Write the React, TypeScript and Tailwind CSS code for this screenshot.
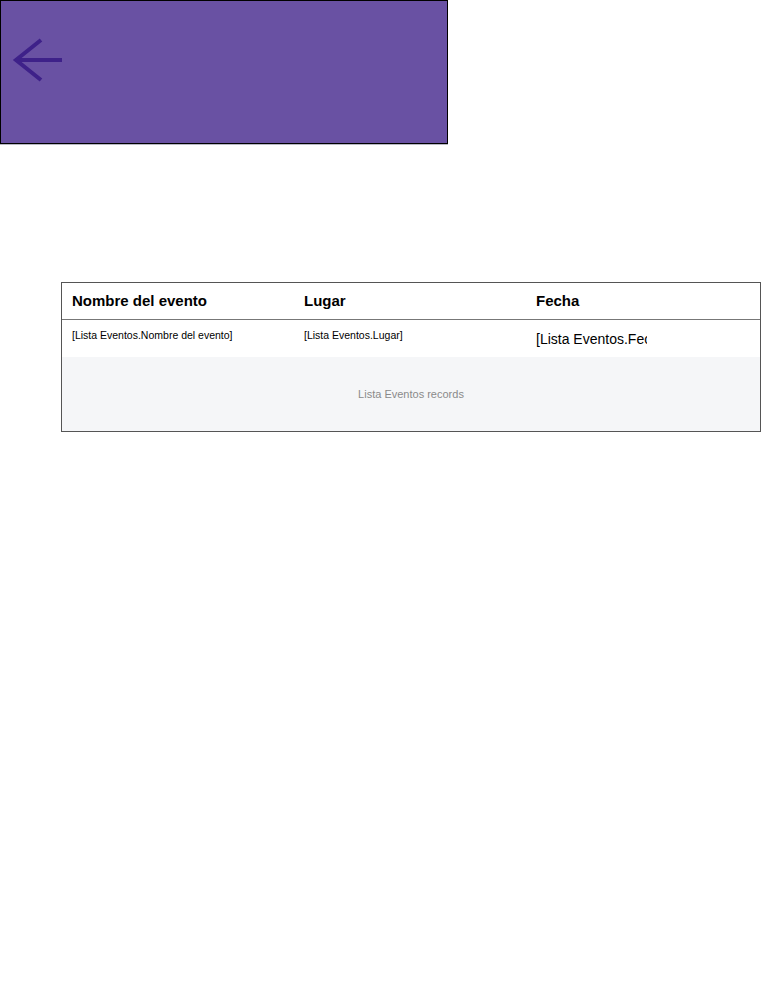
export default function App() {
  return (
    <div className="min-h-[997px] bg-white" style={{ fontFamily: '"Liberation Sans", Arial, sans-serif' }}>
      <div className="w-[448px] h-[145px] border-b border-b-[#b8b8c4]">
        <div className="h-[144px] bg-[#6951a3] border border-black relative">
          <svg width="64" height="64" viewBox="0 0 64 64" className="absolute left-0 top-[27px]" fill="none">
            <path d="M61 32H17" stroke="#3e2189" strokeWidth="4" />
            <path d="M40 12L15 32L40 52" stroke="#3e2189" strokeWidth="4" />
          </svg>
        </div>
      </div>

      <div className="ml-[61px] mt-[137px] w-[700px] border border-[#555]">
        <div className="grid grid-cols-[232px_232px_1fr] h-[37px] items-center border-b border-[#777] text-[15px] font-bold text-black">
          <div className="pl-[10px]">Nombre del evento</div>
          <div className="pl-[10px]">Lugar</div>
          <div className="pl-[10px]">Fecha</div>
        </div>
        <div className="grid grid-cols-[232px_232px_1fr] h-[37px] text-black">
          <div className="pl-[10px] pt-[8px] text-[10.5px]">[Lista Eventos.Nombre del evento]</div>
          <div className="pl-[10px] pt-[8px] text-[10.5px]">[Lista Eventos.Lugar]</div>
          <div className="pl-[10px] pt-[9px] text-[14px]">
            <div className="w-[111px] overflow-hidden whitespace-nowrap">[Lista Eventos.Fecha]</div>
          </div>
        </div>
        <div className="h-[74px] bg-[#f5f6f8] flex items-center justify-center text-[11px] text-[#8a8a8a]">
          Lista Eventos records
        </div>
      </div>
    </div>
  );
}
